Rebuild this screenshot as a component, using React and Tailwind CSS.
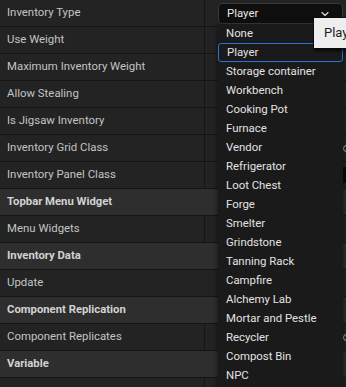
import { ChevronDown } from "lucide-react";

const rows = [
  { label: "Inventory Type" },
  { label: "Use Weight" },
  { label: "Maximum Inventory Weight" },
  { label: "Allow Stealing" },
  { label: "Is Jigsaw Inventory" },
  { label: "Inventory Grid Class", value: "circle" },
  { label: "Inventory Panel Class", value: "box" },
  { label: "Topbar Menu Widget", header: true },
  { label: "Menu Widgets" },
  { label: "Inventory Data", header: true },
  { label: "Update", full: true },
  { label: "Component Replication", header: true },
  { label: "Component Replicates", value: "circle" },
  { label: "Variable", header: true },
  { label: "" },
];

const options = [
  "None",
  "Player",
  "Storage container",
  "Workbench",
  "Cooking Pot",
  "Furnace",
  "Vendor",
  "Refrigerator",
  "Loot Chest",
  "Forge",
  "Smelter",
  "Grindstone",
  "Tanning Rack",
  "Campfire",
  "Alchemy Lab",
  "Mortar and Pestle",
  "Recycler",
  "Compost Bin",
  "NPC",
];

function Row({ row }) {
  if (row.header) {
    return (
      <div className="flex h-[27px] items-center border-b border-[#151515] bg-[#2e2e2e] px-[7px] text-[11.3px] font-bold text-[#d2d2d2]">
        {row.label}
      </div>
    );
  }
  return (
    <div className="flex h-[27px] border-b border-[#151515] bg-[#232323] text-[11.4px] text-[#c4c4c4]">
      <div
        className={`flex items-center px-[7px] ${
          row.full ? "flex-1" : "w-[205px] border-r border-[#151515]"
        }`}
      >
        {row.label}
      </div>
      {!row.full && (
        <div className="flex flex-1 items-center justify-end">
          {row.value === "circle" && (
            <span className="mr-[-4px] h-[7px] w-[7px] rounded-full border border-[#bbb]" />
          )}
          {row.value === "box" && <span className="h-[16px] w-[3px] bg-[#0b0b0b]" />}
        </div>
      )}
    </div>
  );
}

export default function App() {
  return (
    <div
      className="relative h-[387px] w-[346px] overflow-hidden bg-[#1c1c1c]"
      style={{ fontFamily: "Roboto, 'Noto Sans', sans-serif" }}
    >
      <div className="flex flex-col">
        {rows.map((r, i) => (
          <Row key={i} row={r} />
        ))}
      </div>

      {/* combo box */}
      <div className="absolute left-[218px] top-[3px] flex h-[21px] w-[125px] items-center justify-between rounded-[4px] border border-[#383838] bg-[#0f0f0f] pl-[8px] pr-[11px] text-[11.4px] text-[#e6e6e6]">
        <span>Player</span>
        <ChevronDown size={12} strokeWidth={2.2} className="text-[#ddd]" />
      </div>

      {/* dropdown list */}
      <div className="absolute left-[218px] top-[24px] w-[125px] bg-[#1a1a1a] pb-[4px] shadow-[0_2px_6px_rgba(0,0,0,0.6)]">
        {options.map((o) => (
          <div
            key={o}
            className={`flex h-[19px] items-center pl-[8px] text-[11.4px] text-[#e2e2e2] ${
              o === "Player" ? "rounded-[3px] border border-[#2a72d6] pl-[7px]" : ""
            }`}
          >
            {o}
          </div>
        ))}
      </div>

      {/* tooltip */}
      <div className="absolute left-[313px] top-[17px] flex h-[32px] w-[40px] items-center border border-[#0a0a0a] bg-[#eeeeee] pl-[10px] text-[13px] text-[#1e1e1e] shadow-[2px_2px_3px_rgba(0,0,0,0.7)]">
        Play
      </div>
    </div>
  );
}
